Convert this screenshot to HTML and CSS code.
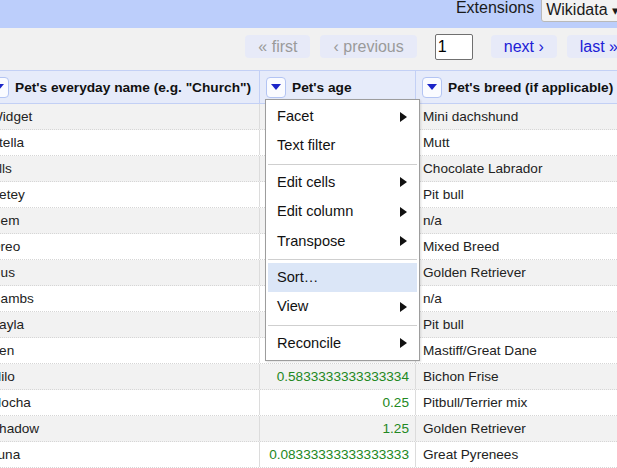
FILE: index.html
```html
<!DOCTYPE html>
<html>
<head>
<meta charset="utf-8">
<link rel="stylesheet" href="styles.css">
</head>
<body>
<div class="page">
  <div class="topbar">
    <span class="ext-label">Extensions</span>
    <div class="ext-btn">Wikidata <span class="caret">▾</span></div>
  </div>
  <div class="pager">
    <span class="pg-btn disabled">« first</span>
    <span class="pg-btn disabled">‹ previous</span>
    <input class="pg-input" type="text" value="1">
    <span class="pg-btn">next ›</span>
    <span class="pg-btn">last »</span>
  </div>
  <div class="table">
    <div class="row head">
      <div class="hcell"><span class="dd"><svg width="10" height="6" viewBox="0 0 10 6"><path d="M0 0H10L5 6Z" fill="#1b24c8"/></svg></span><span>Pet's everyday name (e.g. "Church")</span></div>
      <div class="hcell"><span class="dd"><svg width="10" height="6" viewBox="0 0 10 6"><path d="M0 0H10L5 6Z" fill="#1b24c8"/></svg></span><span>Pet's age</span></div>
      <div class="hcell"><span class="dd"><svg width="10" height="6" viewBox="0 0 10 6"><path d="M0 0H10L5 6Z" fill="#1b24c8"/></svg></span><span>Pet's breed (if applicable)</span></div>
    </div>
    <div class="row odd"><div class="cell">Widget</div><div class="cell num">3</div><div class="cell">Mini dachshund</div></div>
    <div class="row"><div class="cell">Stella</div><div class="cell num">5</div><div class="cell">Mutt</div></div>
    <div class="row odd"><div class="cell">Ells</div><div class="cell num">2</div><div class="cell">Chocolate Labrador</div></div>
    <div class="row"><div class="cell">Petey</div><div class="cell num">7</div><div class="cell">Pit bull</div></div>
    <div class="row odd"><div class="cell">Gem</div><div class="cell num">4</div><div class="cell">n/a</div></div>
    <div class="row"><div class="cell">Oreo</div><div class="cell num">6</div><div class="cell">Mixed Breed</div></div>
    <div class="row odd"><div class="cell">Gus</div><div class="cell num">9</div><div class="cell">Golden Retriever</div></div>
    <div class="row"><div class="cell">Gambs</div><div class="cell num">1</div><div class="cell">n/a</div></div>
    <div class="row odd"><div class="cell">Kayla</div><div class="cell num">8</div><div class="cell">Pit bull</div></div>
    <div class="row"><div class="cell">Ben</div><div class="cell num">10</div><div class="cell">Mastiff/Great Dane</div></div>
    <div class="row odd"><div class="cell">Milo</div><div class="cell num">0.5833333333333334</div><div class="cell">Bichon Frise</div></div>
    <div class="row"><div class="cell">Mocha</div><div class="cell num">0.25</div><div class="cell">Pitbull/Terrier mix</div></div>
    <div class="row odd"><div class="cell">Shadow</div><div class="cell num">1.25</div><div class="cell">Golden Retriever</div></div>
    <div class="row"><div class="cell">Luna</div><div class="cell num">0.08333333333333333</div><div class="cell">Great Pyrenees</div></div>
  </div>
  <div class="menu">
    <div class="mi">Facet<span class="arrow"></span></div>
    <div class="mi">Text filter</div>
    <div class="sep"></div>
    <div class="mi">Edit cells<span class="arrow"></span></div>
    <div class="mi">Edit column<span class="arrow"></span></div>
    <div class="mi">Transpose<span class="arrow"></span></div>
    <div class="sep"></div>
    <div class="mi active">Sort…</div>
    <div class="mi">View<span class="arrow"></span></div>
    <div class="sep"></div>
    <div class="mi">Reconcile<span class="arrow"></span></div>
  </div>
</div>
</body>
</html>
```

FILE: styles.css
```css
html, body {
  margin: 0;
  padding: 0;
  background: #fff;
}
.page {
  position: relative;
  width: 617px;
  height: 468px;
  overflow: hidden;
  font-family: "Liberation Sans", Arial, sans-serif;
  color: #222;
}
.topbar {
  height: 28px;
  background: #bccefb;
  display: flex;
  justify-content: flex-end;
  align-items: flex-start;
  gap: 7px;
  margin-right: -9px;
  font-size: 16px;
}
.ext-label {
  line-height: 18px;
  margin-top: -1px;
  color: #1a1a1a;
}
.ext-btn {
  box-sizing: border-box;
  height: 25px;
  margin-top: -3px;
  padding: 3px 6px 0 4px;
  border: 1px solid #b9b9b9;
  border-radius: 3px;
  background: #f3f3f3;
  color: #1a1a1a;
  line-height: 18px;
}
.caret {
  font-size: 13px;
}
.pager {
  height: 42px;
  background: #f1f1f1;
  display: flex;
  justify-content: flex-end;
  align-items: flex-start;
  margin-right: -14px;
  font-size: 16px;
}
.pg-btn {
  margin-top: 7px;
  height: 23px;
  line-height: 23px;
  padding: 0 13px;
  border-radius: 4px;
  background: #e7eaf8;
  color: #2020d6;
  margin-left: 10px;
}
.pg-btn.disabled {
  color: #9a9a9a;
}
.pg-input {
  box-sizing: border-box;
  margin: 6px 8px 0 18px;
  width: 38px;
  height: 26px;
  border: 1px solid #707070;
  border-radius: 2px;
  padding: 0 2px;
  font-family: "Liberation Sans", Arial, sans-serif;
  font-size: 16px;
  color: #000;
  background: #fff;
  outline: none;
}
.table {
  margin-left: -17px;
}
.row {
  display: grid;
  grid-template-columns: 277px 156px 240px;
  height: 26px;
  box-sizing: border-box;
  border-bottom: 1px dotted #d6d6d6;
  font-size: 13.6px;
}
.row.odd {
  background: #f2f2f2;
}
.row.head {
  height: 34px;
  background: #e6ebfa;
  border-top: 1px solid #c3d0f5;
  border-bottom: 1px solid #c3d0f5;
  font-size: 13.7px;
  font-weight: bold;
  color: #111;
}
.hcell {
  display: flex;
  align-items: center;
  gap: 6px;
  padding: 0 6px;
  border-right: 1px solid #c3d0f5;
  white-space: nowrap;
  overflow: hidden;
}
.dd {
  box-sizing: border-box;
  flex: none;
  width: 20px;
  height: 21px;
  border: 1px solid #b3c4f3;
  border-radius: 4px;
  background: #fafbff;
  display: flex;
  align-items: center;
  justify-content: center;
}
.cell {
  padding: 0 6px 0 7px;
  line-height: 25px;
  border-right: 1px solid #dcdcdc;
  white-space: nowrap;
  overflow: hidden;
}
.cell.num {
  text-align: right;
  color: #228822;
}
.menu {
  position: absolute;
  left: 265px;
  top: 99px;
  width: 155px;
  box-sizing: border-box;
  background: #fff;
  border: 1px solid #9d9d9d;
  padding: 2px;
  box-shadow: 1px 1px 2px rgba(0,0,0,0.12);
  font-size: 14.6px;
  color: #111;
}
.mi {
  height: 29.4px;
  line-height: 29.4px;
  padding: 0 10px 0 9px;
  display: flex;
  justify-content: space-between;
  align-items: center;
}
.mi.active {
  background: #dbe6f7;
}
.arrow {
  width: 0;
  height: 0;
  border-left: 7px solid #111;
  border-top: 5px solid transparent;
  border-bottom: 5px solid transparent;
}
.sep {
  height: 1px;
  background: #cfcfcf;
  margin: 3px 0;
}
```
